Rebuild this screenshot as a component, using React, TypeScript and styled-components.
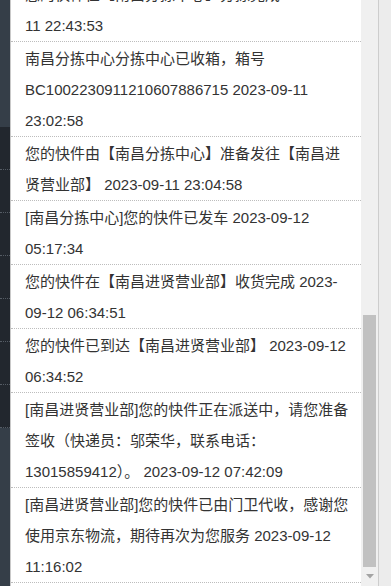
import React from "react";
import styled, { createGlobalStyle } from "styled-components";

const Global = createGlobalStyle`
  html, body { margin: 0; padding: 0; background: #fff; }
  body { font-family: "Liberation Sans", "Noto Sans CJK SC", sans-serif; }
`;

const Screen = styled.div`
  display: flex;
  width: 391px;
  height: 586px;
  overflow: hidden;
`;

const SideStrip = styled.div`
  width: 10px;
  flex-shrink: 0;
  display: flex;
  flex-direction: column;
  background: #353e48;
`;

const SideTop = styled.div`
  height: 127px;
  background: #353e48;
`;

const SideMenu = styled.div`
  display: flex;
  flex-direction: column;
  background: #22272e;
`;

const SideRow = styled.div`
  height: 42px;
  border-bottom: 1px dotted #555c65;
`;

const Panel = styled.div`
  flex: 1;
  display: flex;
  flex-direction: column;
  justify-content: flex-end;
  overflow: hidden;
  background: #fff;
  border-left: 1px solid #c9c9c9;
  padding-bottom: 3px;
`;

const Item = styled.div`
  flex-shrink: 0;
  padding: 1px 10px 0 14px;
  border-bottom: 1px dotted #bdbdbd;
  font-size: 15px;
  line-height: 31px;
  color: #333;
  word-break: normal;
`;

const ScrollTrack = styled.div`
  width: 17px;
  flex-shrink: 0;
  display: flex;
  flex-direction: column;
  background: #f0f0f0;
`;

const TrackSpace = styled.div`
  flex: 1;
`;

const Thumb = styled.div`
  height: 252px;
  margin: 0 2px;
  background: #c1c1c1;
`;

const ArrowButton = styled.div`
  height: 19px;
  display: flex;
  align-items: center;
  justify-content: center;
`;

const OuterEdge = styled.div`
  width: 12px;
  flex-shrink: 0;
  background: #ececec;
  border-left: 1px solid #cdcdcd;
`;

const events: string[] = [
  "您的快件在【南昌分拣中心】分拣完成 2023-09-11 22:43:53",
  "南昌分拣中心分拣中心已收箱，箱号BC1002230911210607886715 2023-09-11 23:02:58",
  "您的快件由【南昌分拣中心】准备发往【南昌进贤营业部】 2023-09-11 23:04:58",
  "[南昌分拣中心]您的快件已发车 2023-09-12 05:17:34",
  "您的快件在【南昌进贤营业部】收货完成 2023-09-12 06:34:51",
  "您的快件已到达【南昌进贤营业部】 2023-09-12 06:34:52",
  "[南昌进贤营业部]您的快件正在派送中，请您准备签收（快递员：邬荣华，联系电话：13015859412）。 2023-09-12 07:42:09",
  "[南昌进贤营业部]您的快件已由门卫代收，感谢您使用京东物流，期待再次为您服务 2023-09-12 11:16:02",
];

export default function App() {
  return (
    <Screen>
      <Global />
      <SideStrip>
        <SideTop />
        <SideMenu>
          {Array.from({ length: 7 }).map((_, i) => (
            <SideRow key={i} />
          ))}
        </SideMenu>
      </SideStrip>
      <Panel>
        {events.map((e, i) => (
          <Item key={i}>{e}</Item>
        ))}
      </Panel>
      <ScrollTrack>
        <TrackSpace />
        <Thumb />
        <ArrowButton>
          <svg width="8" height="5" viewBox="0 0 8 5">
            <path d="M0 0 H8 L4 4.5 Z" fill="#a3a3a3" />
          </svg>
        </ArrowButton>
      </ScrollTrack>
      <OuterEdge />
    </Screen>
  );
}
